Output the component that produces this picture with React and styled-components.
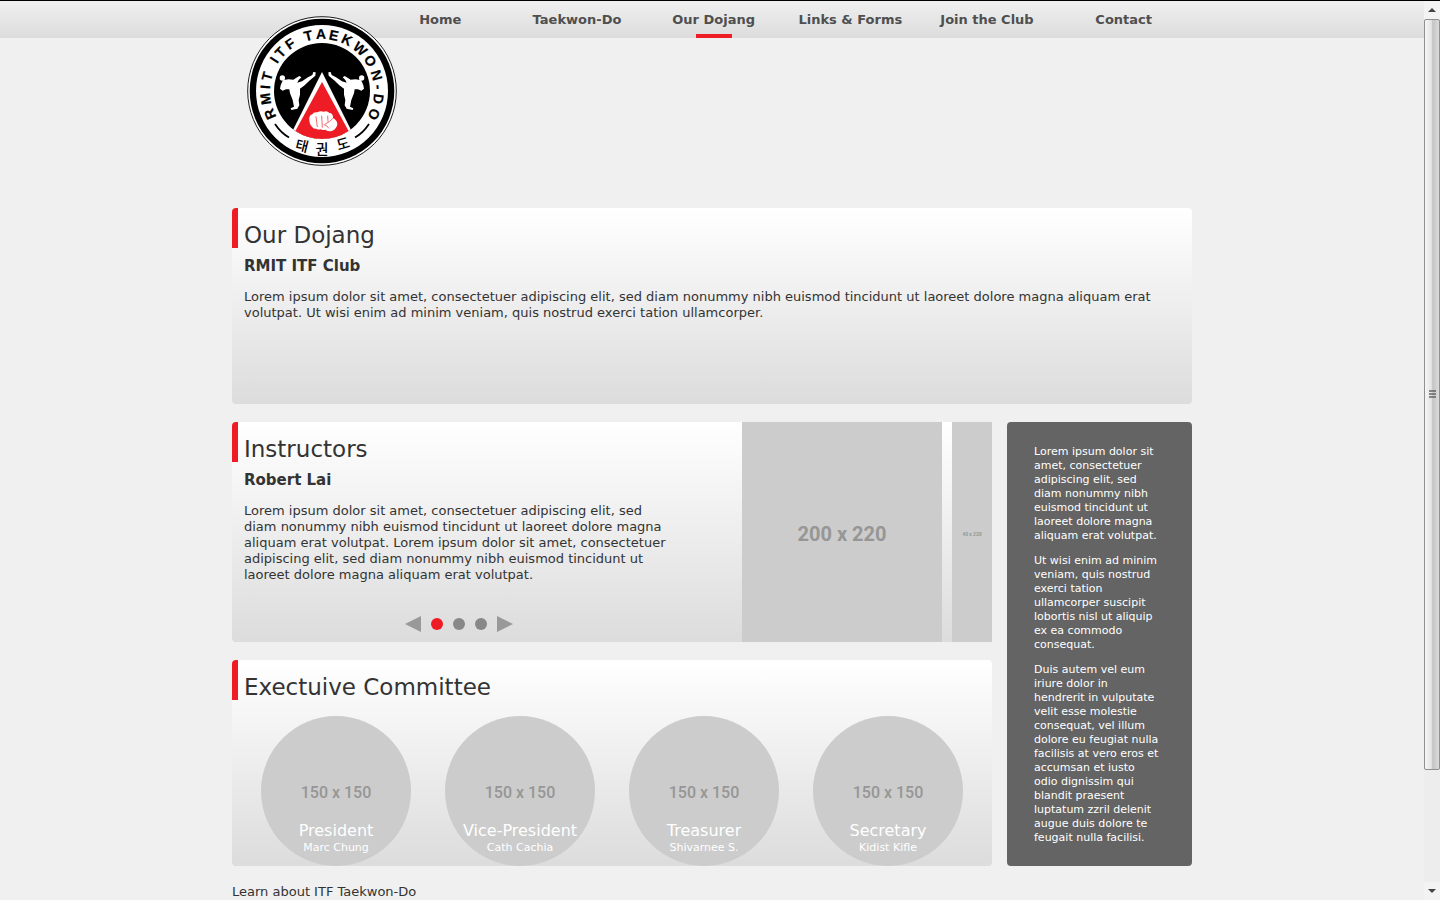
import React from "react";
import styled, { createGlobalStyle } from "styled-components";

const GlobalStyle = createGlobalStyle`
  * { box-sizing: border-box; }
  body {
    margin: 0;
    background: #f0f0f0;
    color: #333;
    font: 13px/16px Verdana, "DejaVu Sans", sans-serif;
  }
  h1, h2, h3, p, ul, figure { margin: 0; padding: 0; }
  ul { list-style: none; }
  a { color: inherit; text-decoration: none; }
  button { border: 0; padding: 0; background: none; cursor: pointer; }
`;

const Window = styled.div`
  display: flex;
  min-height: 100vh;
  border-top: 1px solid #000;
`;

const Page = styled.div`
  flex: 1;
  min-width: 0;
`;

const Container = styled.div`
  max-width: 960px;
  margin: 0 auto;
`;

const Header = styled.header`
  background: linear-gradient(#f0f0f0, #dcdcdc);
`;

const HeaderInner = styled(Container)`
  position: relative;
  display: flex;
  justify-content: flex-end;
`;

const LogoLink = styled.a`
  position: absolute;
  left: 15px;
  top: 15px;
  width: 150px;
  height: 150px;
`;

const NavList = styled.ul`
  display: grid;
  grid-template-columns: repeat(6, 1fr);
  width: 820px;
`;

const NavLink = styled.a`
  display: flex;
  flex-direction: column;
  align-items: center;
  justify-content: space-between;
  height: 37px;
  padding-top: 11px;
  color: #4f4f4f;
  font-weight: bold;
  white-space: nowrap;
  &::after {
    content: "";
    width: 36px;
    height: 4px;
    background: ${(p) => (p.$active ? "#ee1c25" : "transparent")};
  }
`;

const Main = styled(Container).attrs({ as: "main" })`
  display: grid;
  grid-template-columns: minmax(0, 1fr) 185px;
  column-gap: 15px;
  row-gap: 18px;
  padding-top: 170px;
`;

const Panel = styled.section`
  position: relative;
  overflow: hidden;
  min-height: ${(p) => p.$height}px;
  grid-column: ${(p) => (p.$wide ? "1 / -1" : "1")};
  border-radius: 4px;
  background: linear-gradient(#fff, #dcdcdc);
  &::before {
    content: "";
    position: absolute;
    left: 0;
    top: 0;
    width: 6px;
    height: 40px;
    background: #ee1c25;
  }
`;

const SplitPanel = styled(Panel)`
  display: flex;
  justify-content: space-between;
  border-radius: 4px 0 0 4px;
`;

const PanelText = styled.div`
  display: flex;
  flex-direction: column;
  max-width: ${(p) => p.$width || 960}px;
  padding: 13px 12px 10px;
`;

const Title = styled.h2`
  font-size: 23px;
  line-height: 28px;
  font-weight: normal;
`;

const Subtitle = styled.h3`
  margin: 7px 0 13px;
  font-size: 15px;
  line-height: 20px;
`;

const Carousel = styled.div`
  display: flex;
  align-items: center;
  justify-content: center;
  gap: 10px;
  margin-top: auto;
`;

const Arrow = styled.button`
  width: 16px;
  height: 16px;
  background: #999;
  clip-path: ${(p) =>
    p.$next ? "polygon(0 0, 100% 50%, 0 100%)" : "polygon(100% 0, 0 50%, 100% 100%)"};
`;

const Dot = styled.button`
  width: 12px;
  height: 12px;
  border-radius: 50%;
  background: ${(p) => (p.$active ? "#ee1c25" : "#888")};
`;

const Photos = styled.div`
  display: flex;
  gap: 10px;
`;

const Photo = styled.figure`
  display: flex;
  align-items: center;
  justify-content: center;
  width: ${(p) => p.$width}px;
  padding-top: 4px;
  background: #ccc;
  color: #969696;
  font: bold ${(p) => p.$size}px/24px Roboto, sans-serif;
`;

const Members = styled.ul`
  display: grid;
  grid-template-columns: repeat(4, 1fr);
  justify-items: center;
  padding: 15px 12px 0;
`;

const CommitteeTitle = styled(Title)`
  padding: 13px 12px 0;
`;

const Member = styled.li`
  display: flex;
  flex-direction: column;
  align-items: center;
  width: 150px;
  height: 150px;
  padding-top: 67px;
  border-radius: 50%;
  background: #ccc;
  color: #fff;
  white-space: nowrap;
`;

const Size = styled.span`
  color: #969696;
  font: 500 16px/20px Roboto, sans-serif;
`;

const Role = styled.span`
  margin-top: 18px;
  font-size: 16px;
  line-height: 20px;
`;

const Name = styled.span`
  font-size: 11px;
  line-height: 14px;
`;

const Aside = styled.aside`
  display: flex;
  flex-direction: column;
  gap: 11px;
  grid-column: 2;
  grid-row: 2 / 4;
  padding: 23px 31px 20px 27px;
  border-radius: 4px;
  background: #646464;
  color: #fff;
  font-size: 11px;
  line-height: 14px;
`;

const Footer = styled(Container).attrs({ as: "footer" })`
  padding-top: 18px;
`;

const Scrollbar = styled.div`
  display: flex;
  flex-direction: column;
  width: 16px;
  background: #ededed;
`;

const ScrollButton = styled.button`
  display: flex;
  align-items: center;
  justify-content: center;
  height: 18px;
  background: #f3f3f3;
`;

const Thumb = styled.div`
  display: flex;
  align-items: center;
  justify-content: center;
  flex: 751;
  border: 1px solid #8f8f8f;
  border-radius: 2px;
  background: linear-gradient(90deg, #f6f6f6, #e4e4e4 45%, #c4c4c6 55%, #dcdcdc);
`;

const Track = styled.div`
  flex: 112;
`;

const letters = [
  ["R", -114], ["M", -98], ["I", -86], ["T", -75],
  ["I", -57], ["T", -47], ["F", -34],
  ["T", -14], ["A", -1], ["E", 12], ["K", 26], ["W", 42], ["O", 58],
  ["N", 74], ["-", 86], ["D", 98], ["O", 114],
];

const kicker =
  "M34 48 L50 46 L64 47 L72 42 L82 36 L88 40 L80 48 L76 56 L90 52 L108 40 L121 33 L124 24 L131 25 L130 35 L112 50 L98 64 L84 74 L84 92 L80 108 L82 124 L76 134 L58 138 L56 133 L66 128 L62 108 L54 88 L52 76 L42 76 L32 80 L24 74 L26 64 L30 54 Z";

function Kicker({ transform }) {
  return (
    <g transform={transform} fill="#fff">
      <circle cx="31" cy="42" r="8" />
      <path d={kicker} />
    </g>
  );
}

function Logo() {
  return (
    <svg width="150" height="150" viewBox="0 0 150 150" role="img" aria-label="RMIT ITF Taekwon-Do">
      <defs>
        <clipPath id="disc"><circle cx="75" cy="75" r="48" /></clipPath>
      </defs>
      <circle cx="75" cy="75" r="74.3" fill="#fff" stroke="#000" strokeWidth="0.9" />
      <circle cx="75" cy="75" r="72.3" fill="#000" />
      <circle cx="75" cy="75" r="66" fill="#fff" />
      <circle cx="75" cy="75" r="48" fill="#000" />
      <g clipPath="url(#disc)">
        <path d="M75 56 L110 126 H40 Z" fill="#fff" />
      </g>
      <path d="M75 66 L101.6 115 A48 48 0 0 1 48.4 115 Z" fill="#ee1c25" />
      <Kicker transform="translate(25 48) scale(.3333)" />
      <Kicker transform="translate(125 48) scale(-.3333 .3333)" />
      <g transform="translate(43 86) scale(.3333)" strokeLinecap="round">
        <path d="M58 56 Q56 39 67 37 Q71 29 82 31 Q91 25 101 29 Q112 25 118 33 Q128 33 129 44 L129 48 Q142 55 142 67 Q141 80 126 87 Q114 90 106 83 Q98 86 92 82 Q84 84 79 80 Q70 82 66 74 Q60 70 58 56 Z" fill="#fff" />
        <path d="M78 44 L82 74 M95 42 L97 76 M113 42 L114 58 M106 66 Q120 60 128 50 M102 68 Q112 70 116 78" fill="none" stroke="#ee1c25" strokeWidth="2" />
      </g>
      <path d="M28 108 Q34 117 42 121.5 M108 121.5 Q116 117 122 108" fill="none" stroke="#000" strokeWidth="1.8" />
      <g
        fontFamily="Liberation Sans, sans-serif"
        fontWeight="bold"
        fontSize="14"
        textAnchor="middle"
        stroke="#000"
        strokeWidth="0.2"
      >
        {letters.map(([letter, angle]) => (
          <text key={angle} x="75" y="23" transform={`rotate(${angle} 75 75)`}>{letter}</text>
        ))}
      </g>
      <g fontFamily="Noto Sans CJK KR, sans-serif" fontSize="14" fontWeight="500" textAnchor="middle">
        <text x="55" y="135" transform="rotate(14 55 130)">태</text>
        <text x="75" y="138">권</text>
        <text x="96" y="133" transform="rotate(-16 96 128)">도</text>
      </g>
    </svg>
  );
}

const pages = ["Home", "Taekwon-Do", "Our Dojang", "Links & Forms", "Join the Club", "Contact"];

const members = [
  ["President", "Marc Chung"],
  ["Vice-President", "Cath Cachia"],
  ["Treasurer", "Shivarnee S."],
  ["Secretary", "Kidist Kifle"],
];

export default function App() {
  return (
    <>
      <GlobalStyle />
      <Window>
        <Page>
          <Header>
            <HeaderInner>
              <LogoLink href="#home"><Logo /></LogoLink>
              <nav>
                <NavList>
                  {pages.map((page) => (
                    <li key={page}>
                      <NavLink href="#" $active={page === "Our Dojang"}>{page}</NavLink>
                    </li>
                  ))}
                </NavList>
              </nav>
            </HeaderInner>
          </Header>
          <Main>
            <Panel $wide $height={196}>
              <PanelText>
                <Title as="h1">Our Dojang</Title>
                <Subtitle>RMIT ITF Club</Subtitle>
                <p>
                  Lorem ipsum dolor sit amet, consectetuer adipiscing elit, sed diam nonummy nibh
                  euismod tincidunt ut laoreet dolore magna aliquam erat volutpat. Ut wisi enim ad
                  minim veniam, quis nostrud exerci tation ullamcorper.
                </p>
              </PanelText>
            </Panel>
            <SplitPanel $height={220}>
              <PanelText $width={454}>
                <Title>Instructors</Title>
                <Subtitle>Robert Lai</Subtitle>
                <p>
                  Lorem ipsum dolor sit amet, consectetuer adipiscing elit, sed diam nonummy nibh
                  euismod tincidunt ut laoreet dolore magna aliquam erat volutpat. Lorem ipsum
                  dolor sit amet, consectetuer adipiscing elit, sed diam nonummy nibh euismod
                  tincidunt ut laoreet dolore magna aliquam erat volutpat.
                </p>
                <Carousel>
                  <Arrow aria-label="Previous instructor" />
                  <Dot $active aria-label="Instructor 1" />
                  <Dot aria-label="Instructor 2" />
                  <Dot aria-label="Instructor 3" />
                  <Arrow $next aria-label="Next instructor" />
                </Carousel>
              </PanelText>
              <Photos>
                <Photo $width={200} $size={20}>200 x 220</Photo>
                <Photo $width={40} $size={5}>40 x 220</Photo>
              </Photos>
            </SplitPanel>
            <Panel $height={206}>
              <CommitteeTitle>Exectuive Committee</CommitteeTitle>
              <Members>
                {members.map(([role, name]) => (
                  <Member key={role}>
                    <Size>150 x 150</Size>
                    <Role>{role}</Role>
                    <Name>{name}</Name>
                  </Member>
                ))}
              </Members>
            </Panel>
            <Aside>
              <p>
                Lorem ipsum dolor sit amet, consectetuer adipiscing elit, sed diam nonummy nibh
                euismod tincidunt ut laoreet dolore magna aliquam erat volutpat.
              </p>
              <p>
                Ut wisi enim ad minim veniam, quis nostrud exerci tation ullamcorper suscipit
                lobortis nisl ut aliquip ex ea commodo consequat.
              </p>
              <p>
                Duis autem vel eum iriure dolor in hendrerit in vulputate velit esse molestie
                consequat, vel illum dolore eu feugiat nulla facilisis at vero eros et accumsan et
                iusto odio dignissim qui blandit praesent luptatum zzril delenit augue duis dolore
                te feugait nulla facilisi.
              </p>
            </Aside>
          </Main>
          <Footer>Learn about ITF Taekwon-Do</Footer>
        </Page>
        <Scrollbar>
          <ScrollButton aria-label="Scroll up">
            <svg width="8" height="4"><path d="M4 0 L8 4 H0 Z" fill="#444" /></svg>
          </ScrollButton>
          <Thumb>
            <svg width="7" height="9"><path d="M0 1 H7 M0 4 H7 M0 7 H7" stroke="#666" strokeWidth="1.5" /></svg>
          </Thumb>
          <Track />
          <ScrollButton aria-label="Scroll down">
            <svg width="8" height="4"><path d="M0 0 H8 L4 4 Z" fill="#444" /></svg>
          </ScrollButton>
        </Scrollbar>
      </Window>
    </>
  );
}
